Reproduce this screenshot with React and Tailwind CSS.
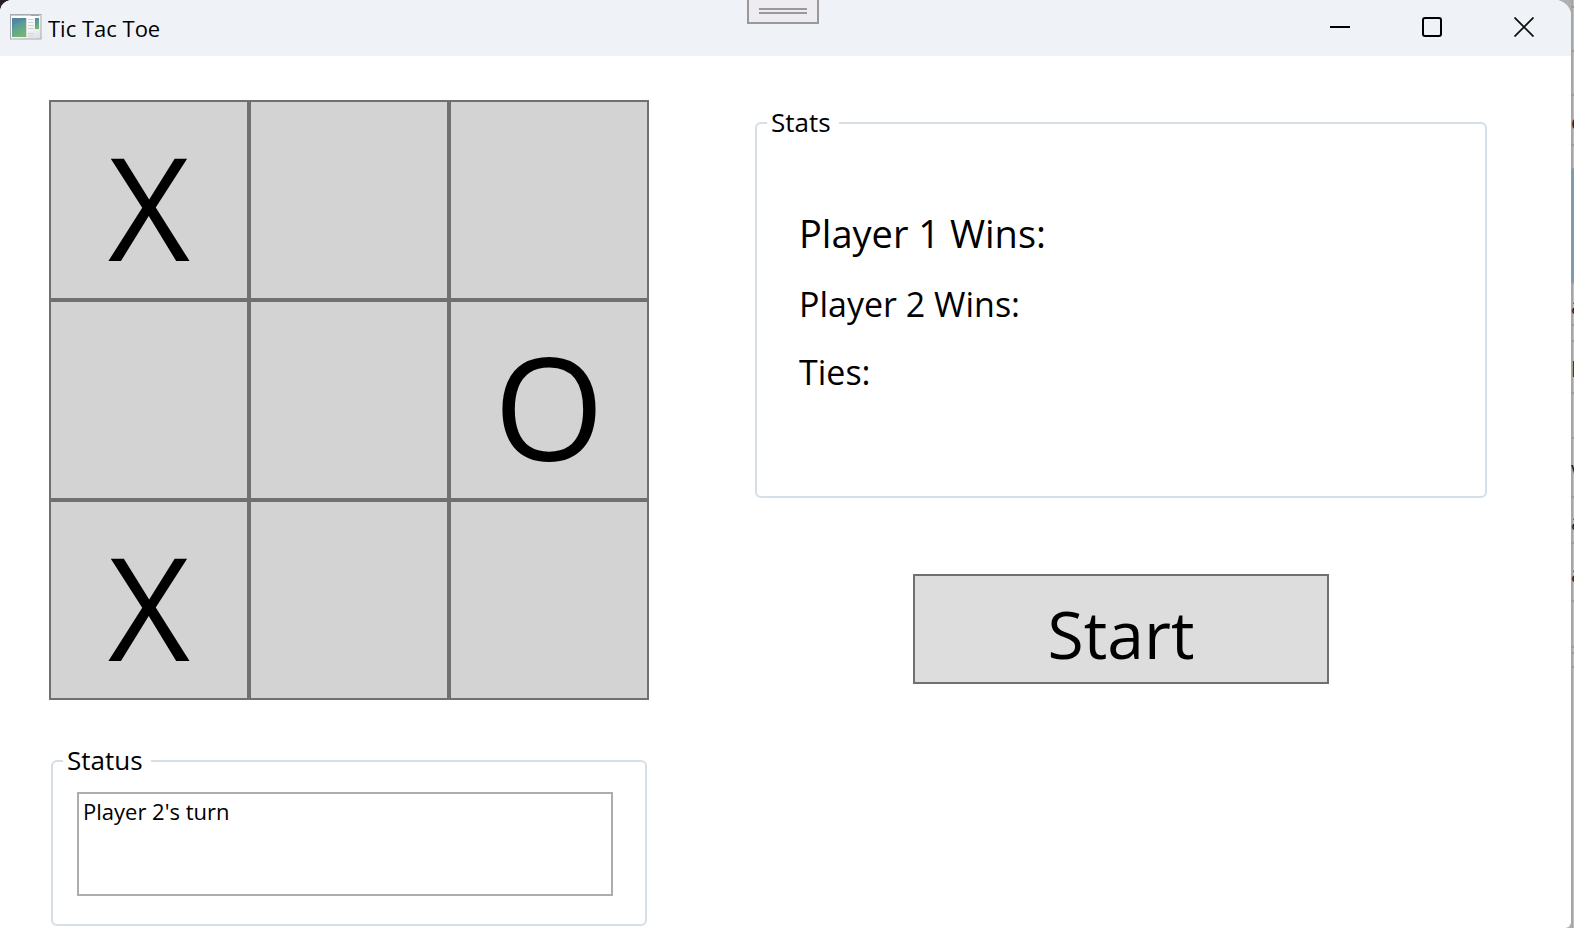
import { useState } from "react";

const INITIAL_CELLS = ["X", "", "", "", "", "O", "X", "", ""];

const BACKDROP_ROWS = [
  { size: "h-2" },
  { size: "h-11" },
  { size: "h-11" },
  { size: "h-[50px]", text: "e" },
  { size: "h-6" },
  { size: "h-[114px]", tone: "bg-[#7f9cae]" },
  { size: "h-[42px]", text: "a" },
  { size: "h-4" },
  { size: "h-[52px]", text: "E" },
  { size: "h-[45px]" },
  { size: "h-[59px]", text: "v" },
  { size: "h-[46px]", text: "a" },
  { size: "h-[58px]", text: "a" },
  { size: "h-[46px]" },
  { size: "h-1.5" },
  { size: "h-3.5" },
];

function Backdrop() {
  return (
    <aside aria-hidden="true" className="w-[3px] shrink-0 overflow-hidden bg-linear-to-r from-[#a6a6a6] from-50% to-[#cdcdcd]">
      {BACKDROP_ROWS.map((row, i) => (
        <div key={i} className={`flex items-center overflow-hidden border-b-2 border-[#9c9ca4] pt-1 text-[21px] leading-none text-[#1e2436] ${row.size} ${row.tone || ""}`}>
          {row.text}
        </div>
      ))}
    </aside>
  );
}

function AppIcon() {
  return (
    <svg width="32" height="26" viewBox="0 0 32 26" aria-hidden="true" className="mb-0.5 shrink-0">
      <defs>
        <linearGradient id="pane" x1="0" y1="0" x2="0.4" y2="1">
          <stop offset="0" stopColor="#5384a8" />
          <stop offset="0.45" stopColor="#5a9a9a" />
          <stop offset="1" stopColor="#72b572" />
        </linearGradient>
        <linearGradient id="paper" x1="0" y1="0" x2="1" y2="1">
          <stop offset="0.4" stopColor="#ffffff" />
          <stop offset="1" stopColor="#dedfe2" />
        </linearGradient>
      </defs>
      <rect x="0.5" y="0.5" width="30.5" height="24.5" fill="url(#paper)" stroke="#a9abb1" />
      <path d="M1 1.5H30" stroke="#c9ccd2" />
      <path d="M21 1.5H29" stroke="#9fa3aa" />
      <rect x="2" y="4" width="14" height="19" fill="url(#pane)" />
      <path d="M2 13C6 8 11 7 16 6V4H2Z" fill="#4f7da5" opacity="0.5" />
      <rect x="16" y="4" width="1" height="19" fill="#d8dade" />
      <path d="M18 5.5H23.5M18 8.5H23.5M18 11.5H23.5M18 14.5H23.5M18 19.5H23.5M18 22H23.5" stroke="#cfd1d4" />
      <rect x="25" y="4" width="4" height="11" fill="url(#pane)" />
    </svg>
  );
}

function TitleBar() {
  return (
    <header className="relative flex h-14 items-center justify-between bg-[#eff3f8]">
      <div className="flex items-center gap-1.5 pl-2.5">
        <AppIcon />
        <h1 className="text-[22px] leading-8">Tic Tac Toe</h1>
      </div>
      <div className="absolute top-0 left-[747px] flex h-6 w-[72px] flex-col gap-0.5 border-2 border-t-0 border-[#999999] bg-[#eeecf1] px-2.5 pt-2">
        <span className="h-0.5 bg-[#999999]" />
        <span className="h-0.5 bg-[#999999]" />
      </div>
      <div className="flex h-full pr-px pb-0.5">
        <button type="button" aria-label="Minimize" className="flex w-23 items-center justify-center">
          <svg width="20" height="20" viewBox="0 0 20 20"><path d="M0 10H20" stroke="#000" strokeWidth="2" /></svg>
        </button>
        <button type="button" aria-label="Maximize" className="flex w-23 items-center justify-center">
          <svg width="20" height="20" viewBox="0 0 20 20"><rect x="1" y="1" width="18" height="18" rx="2" fill="none" stroke="#000" strokeWidth="2" /></svg>
        </button>
        <button type="button" aria-label="Close" className="flex w-23 items-center justify-center">
          <svg width="20" height="20" viewBox="0 0 20 20"><path d="M0.5 0.5L19.5 19.5M19.5 0.5L0.5 19.5" stroke="#111" strokeWidth="1.8" /></svg>
        </button>
      </div>
    </header>
  );
}

function Board({ cells, onPlay }) {
  return (
    <div className="grid aspect-square grid-cols-3 grid-rows-3">
      {cells.map((mark, i) => (
        <button
          key={i}
          type="button"
          aria-label={mark || "Empty square"}
          onClick={() => onPlay(i)}
          className="flex items-center justify-center border-2 border-[#707070] bg-[#d3d3d3] pt-3 text-[142px] leading-none"
        >
          {mark}
        </button>
      ))}
    </div>
  );
}

export default function App() {
  const [cells, setCells] = useState(INITIAL_CELLS);
  const [turn, setTurn] = useState(2);

  const play = (i) => {
    if (cells[i]) return;
    setCells(cells.map((c, n) => (n === i ? (turn === 1 ? "X" : "O") : c)));
    setTurn(turn === 1 ? 2 : 1);
  };

  const start = () => {
    setCells(Array(9).fill(""));
    setTurn(1);
  };

  return (
    <div className="flex min-h-screen bg-linear-to-r from-[#241f22] from-50% to-[#b0b0b0] to-50% font-['Open_Sans',sans-serif] text-black">
      <div className="min-h-screen grow overflow-hidden rounded-tl-xl rounded-tr-2xl rounded-br-md bg-white">
        <TitleBar />
        <main className="grid grid-cols-[600fr_732fr] gap-x-[106px] pt-11 pr-[84px] pl-[49px]">
          <section>
            <Board cells={cells} onPlay={play} />
            <fieldset className="mx-0.5 mt-[45px] rounded-md border-2 border-[#d5dfe5] pt-[15px] pr-8 pb-7 pl-6">
              <legend className="-ml-3.5 pr-2 pb-0.5 pl-1 text-[26px] leading-[30px]">Status</legend>
              <textarea
                readOnly
                aria-label="Status"
                value={`Player ${turn}'s turn`}
                className="block h-[104px] w-full resize-none border-2 border-[#abadb3] bg-white px-1 py-0 text-[22px] leading-[34px] outline-none"
              />
            </fieldset>
          </section>
          <section className="pt-[7px]">
            <fieldset className="h-[391px] rounded-md border-2 border-[#d5dfe5] px-[42px] pt-[66px]">
              <legend className="-ml-8 pr-2 pb-0.5 pl-1 text-[26px] leading-[30px]">Stats</legend>
              <p className="text-[38px] leading-[56px]">Player 1 Wins:</p>
              <p className="mt-[15px] text-[34px] leading-[56px]">Player 2 Wins:</p>
              <p className="mt-3 text-[34px] leading-[56px]">Ties:</p>
            </fieldset>
            <button
              type="button"
              onClick={start}
              className="mx-auto mt-[76px] flex h-[110px] w-[416px] items-center justify-center border-2 border-[#707070] bg-[#dddddd] pt-2 text-[66px] leading-none"
            >
              Start
            </button>
          </section>
        </main>
      </div>
      <Backdrop />
    </div>
  );
}
